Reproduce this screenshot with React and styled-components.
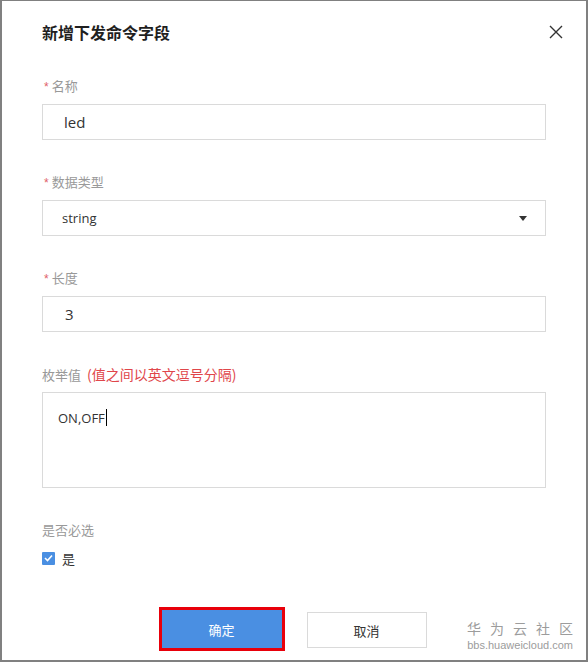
import React from 'react';
import styled, { createGlobalStyle } from 'styled-components';

const GlobalStyle = createGlobalStyle`
  html, body {
    margin: 0;
    padding: 0;
    background: #fff;
  }
  body {
    font-family: 'Open Sans', 'Noto Sans CJK SC', sans-serif;
  }
`;

const Frame = styled.div`
  background: #fff;
  border-color: #808080;
  border-style: solid;
  border-width: 1px 2px 2px 2px;
  box-sizing: border-box;
  display: flex;
  flex-direction: column;
  height: 662px;
  padding: 19px 40px 0 40px;
  position: relative;
  width: 588px;
`;

const Header = styled.div`
  align-items: center;
  display: flex;
  height: 24px;
  justify-content: space-between;
  margin-bottom: 32px;
`;

const Title = styled.div`
  color: #1f1f1f;
  font-family: 'Noto Sans CJK SC', sans-serif;
  font-size: 16px;
  font-weight: 700;
  height: 24px;
  line-height: 24px;
`;

const CloseButton = styled.div`
  cursor: pointer;
  display: flex;
  margin-right: -17px;
`;

const Field = styled.div`
  display: flex;
  flex-direction: column;
  gap: 8px;
  margin-bottom: 32px;
`;

const Label = styled.div`
  color: #999;
  font-family: 'Noto Sans CJK SC', sans-serif;
  font-size: 13px;
  height: 20px;
  line-height: 20px;
  overflow: hidden;
  padding-left: ${props => (props.required ? '2px' : '0')};
`;

const Star = styled.span`
  color: #e0606a;
  font-family: 'Liberation Sans', sans-serif;
  font-size: 12px;
  margin-right: 3px;
`;

const Hint = styled.span`
  color: #e0464a;
  font-size: 14px;
  margin-left: 6px;
`;

const Box = styled.div`
  align-items: ${props => (props.multi ? 'flex-start' : 'center')};
  border: 1px solid #dadada;
  box-sizing: border-box;
  color: #333;
  display: flex;
  font-family: 'Open Sans', 'Noto Sans CJK SC', sans-serif;
  font-size: ${props => props.size || '14px'};
  height: ${props => (props.multi ? '96px' : '36px')};
  justify-content: space-between;
  line-height: 20px;
  padding: ${props => (props.multi ? '15px 0 0 15px' : `0 18px 0 ${props.indent || '20px'}`)};
`;

const Caret = styled.span`
  border-left: 4px solid transparent;
  border-right: 4px solid transparent;
  border-top: 5px solid #333;
  height: 0;
  width: 0;
`;

const Cursor = styled.span`
  background: #000;
  display: inline-block;
  height: 17px;
  margin-left: 1px;
  vertical-align: -3px;
  width: 1px;
`;

const CheckRow = styled.div`
  align-items: center;
  color: #333;
  display: flex;
  font-family: 'Noto Sans CJK SC', sans-serif;
  font-size: 13px;
  gap: 7px;
  height: 20px;
  margin-top: 8px;
`;

const CheckBox = styled.span`
  align-items: center;
  background: #4a8fe2;
  border-radius: 1px;
  display: flex;
  height: 13px;
  justify-content: center;
  width: 13px;
`;

const Footer = styled.div`
  display: flex;
  gap: 25px;
  justify-content: center;
  margin-top: 42px;
`;

const Button = styled.div`
  align-items: center;
  background: ${props => (props.primary ? '#4a8fe2' : '#fff')};
  border: ${props => (props.primary ? 'none' : '1px solid #dadada')};
  box-sizing: border-box;
  color: ${props => (props.primary ? '#fff' : '#333')};
  display: flex;
  font-family: 'Noto Sans CJK SC', sans-serif;
  font-size: 13px;
  height: ${props => (props.primary ? '38px' : '36px')};
  justify-content: center;
  margin-top: ${props => (props.primary ? '0' : '2px')};
  outline: ${props => (props.highlight ? '3px solid #e8000b' : 'none')};
  width: 120px;
`;

const Watermark = styled.div`
  align-items: flex-end;
  bottom: 8px;
  color: #9c9c9c;
  display: flex;
  flex-direction: column;
  position: absolute;
  right: 13px;
`;

const WatermarkName = styled.div`
  font-family: 'Noto Sans CJK SC', sans-serif;
  font-size: 14px;
  letter-spacing: 9px;
  line-height: 16px;
  margin-right: -9px;
`;

const WatermarkUrl = styled.div`
  font-family: 'Liberation Sans', sans-serif;
  font-size: 11px;
  line-height: 14px;
  margin-top: 2px;
`;

const App = () => (
  <>
    <GlobalStyle />
    <Frame>
      <Header>
        <Title>新增下发命令字段</Title>
        <CloseButton>
          <svg width="14" height="14" viewBox="0 0 14 14">
            <path d="M1 1 L13 13 M13 1 L1 13" stroke="#333" strokeWidth="1.4" fill="none" />
          </svg>
        </CloseButton>
      </Header>

      <Field>
        <Label required>
          <Star>*</Star>名称
        </Label>
        <Box indent="21px" size="15px">led</Box>
      </Field>

      <Field>
        <Label required>
          <Star>*</Star>数据类型
        </Label>
        <Box indent="19px" size="13px">
          string
          <Caret />
        </Box>
      </Field>

      <Field>
        <Label required>
          <Star>*</Star>长度
        </Label>
        <Box indent="22px" size="15px">3</Box>
      </Field>

      <Field>
        <Label>
          枚举值<Hint>(值之间以英文逗号分隔)</Hint>
        </Label>
        <Box multi size="13px">
          <span>
            ON,OFF
            <Cursor />
          </span>
        </Box>
      </Field>

      <Label>是否必选</Label>
      <CheckRow>
        <CheckBox>
          <svg width="9" height="8" viewBox="0 0 9 8">
            <path d="M1 4 L3.5 6.5 L8 1.5" stroke="#fff" strokeWidth="1.6" fill="none" />
          </svg>
        </CheckBox>
        是
      </CheckRow>

      <Footer>
        <Button primary highlight>确定</Button>
        <Button>取消</Button>
      </Footer>

      <Watermark>
        <WatermarkName>华为云社区</WatermarkName>
        <WatermarkUrl>bbs.huaweicloud.com</WatermarkUrl>
      </Watermark>
    </Frame>
  </>
);

export default App;
